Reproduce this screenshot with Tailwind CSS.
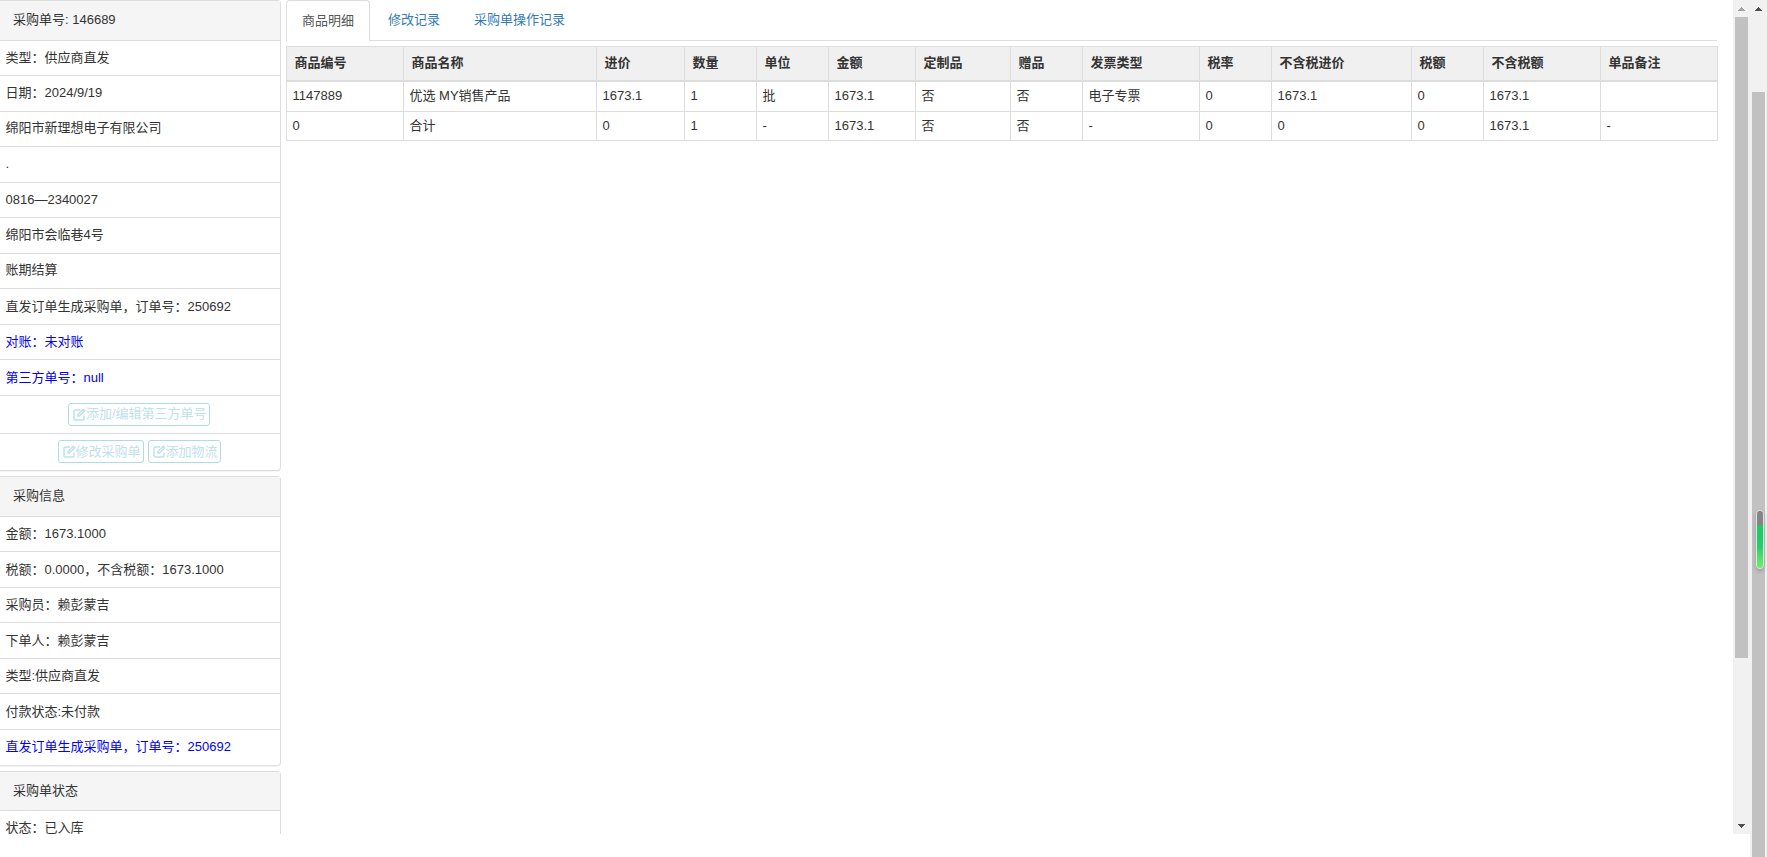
<!DOCTYPE html>
<html lang="zh-CN">
<head>
    <meta charset="UTF-8">
    <meta name="viewport" content="width=device-width, initial-scale=1.0">
    <title>采购单详情</title>
    <script src="https://cdn.jsdelivr.net/npm/@tailwindcss/browser@4"></script>
</head>
<body class="h-screen overflow-hidden bg-white text-[13px] text-[#333] font-['Liberation_Sans','Noto_Sans_CJK_SC',sans-serif]">
<div class="flex h-[857px]">
    <div class="flex flex-col flex-1 min-w-0">
        <div class="flex h-[834px]">
            <!-- Left panels -->
            <aside class="w-[281px] shrink-0 h-full overflow-hidden">
                <div class="border border-l-0 border-[#ddd] rounded-r-[4px] shadow-[0_1px_1px_rgba(0,0,0,0.05)] mb-[5.5px]">
                    <div class="h-[39.5px] flex items-center pl-[13px] pb-[1px] bg-[#f5f5f5] border-b border-[#ddd]">采购单号: 146689</div>
                    <div class="h-[35.5px] flex items-center px-[5.5px] pb-[1px] border-b border-[#ddd]">类型：供应商直发</div>
                    <div class="h-[35.5px] flex items-center px-[5.5px] pb-[2px] border-b border-[#ddd]">日期：2024/9/19</div>
                    <div class="h-[35.5px] flex items-center px-[5.5px] pb-[2px] border-b border-[#ddd]">绵阳市新理想电子有限公司</div>
                    <div class="h-[35.5px] flex items-center px-[5.5px] pb-[1px] border-b border-[#ddd]">.</div>
                    <div class="h-[35.5px] flex items-center px-[5.5px] border-b border-[#ddd]">0816—2340027</div>
                    <div class="h-[35.5px] flex items-center px-[5.5px] pb-[1px] border-b border-[#ddd]">绵阳市会临巷4号</div>
                    <div class="h-[35.5px] flex items-center px-[5.5px] pb-[2px] border-b border-[#ddd]">账期结算</div>
                    <div class="h-[35.5px] flex items-center px-[5.5px] border-b border-[#ddd]">直发订单生成采购单，订单号：250692</div>
                    <div class="h-[35.5px] flex items-center px-[5.5px] border-b border-[#ddd] text-[#0000ff]">对账：未对账</div>
                    <div class="h-[35.5px] flex items-center px-[5.5px] border-b border-[#ddd] text-[#0000ff]">第三方单号：null</div>
                    <div class="h-[38px] flex items-center justify-center pr-[2px] border-b border-[#ddd]">
                        <button class="h-[23px] w-[142px] flex items-center pl-[4px] border border-[#aedbe8] rounded-[3px] text-[#bfe1ec]">
                            <svg class="w-[13px] h-[13px]" viewBox="0 0 13 13" fill="none" stroke="#bfe1ec" stroke-width="1.5"><path d="M11 7.5V10.5a1.5 1.5 0 0 1-1.5 1.5H2.5A1.5 1.5 0 0 1 1 10.5V3.5A1.5 1.5 0 0 1 2.5 2H7"/><path d="M5 6.5 10.2 1.3l1.5 1.5L6.5 8H5z"/></svg>
                            添加/编辑第三方单号
                        </button>
                    </div>
                    <div class="h-[36px] flex items-center justify-center gap-[4px] pr-[2px]">
                        <button class="h-[23px] w-[86px] flex items-center pl-[4px] border border-[#aedbe8] rounded-[3px] text-[#bfe1ec]">
                            <svg class="w-[13px] h-[13px]" viewBox="0 0 13 13" fill="none" stroke="#bfe1ec" stroke-width="1.5"><path d="M11 7.5V10.5a1.5 1.5 0 0 1-1.5 1.5H2.5A1.5 1.5 0 0 1 1 10.5V3.5A1.5 1.5 0 0 1 2.5 2H7"/><path d="M5 6.5 10.2 1.3l1.5 1.5L6.5 8H5z"/></svg>
                            修改采购单
                        </button>
                        <button class="h-[23px] w-[73px] flex items-center pl-[4px] border border-[#aedbe8] rounded-[3px] text-[#bfe1ec]">
                            <svg class="w-[13px] h-[13px]" viewBox="0 0 13 13" fill="none" stroke="#bfe1ec" stroke-width="1.5"><path d="M11 7.5V10.5a1.5 1.5 0 0 1-1.5 1.5H2.5A1.5 1.5 0 0 1 1 10.5V3.5A1.5 1.5 0 0 1 2.5 2H7"/><path d="M5 6.5 10.2 1.3l1.5 1.5L6.5 8H5z"/></svg>
                            添加物流
                        </button>
                    </div>
                </div>

                <div class="border border-l-0 border-[#ddd] rounded-r-[4px] shadow-[0_1px_1px_rgba(0,0,0,0.05)] mb-[5px]">
                    <div class="h-[39.5px] flex items-center pl-[13px] pb-[1px] bg-[#f5f5f5] border-b border-[#ddd]">采购信息</div>
                    <div class="h-[35.5px] flex items-center px-[5.5px] border-b border-[#ddd]">金额：1673.1000</div>
                    <div class="h-[35.5px] flex items-center px-[5.5px] border-b border-[#ddd]">税额：0.0000，不含税额：1673.1000</div>
                    <div class="h-[35.5px] flex items-center px-[5.5px] pb-[1px] border-b border-[#ddd]">采购员：赖彭蒙吉</div>
                    <div class="h-[35.5px] flex items-center px-[5.5px] border-b border-[#ddd]">下单人：赖彭蒙吉</div>
                    <div class="h-[35.5px] flex items-center px-[5.5px] pb-[1px] border-b border-[#ddd]">类型:供应商直发</div>
                    <div class="h-[35.5px] flex items-center px-[5.5px] border-b border-[#ddd]">付款状态:未付款</div>
                    <div class="h-[35px] flex items-center px-[5.5px] text-[#0000ff]">直发订单生成采购单，订单号：250692</div>
                </div>

                <div class="border border-l-0 border-[#ddd] rounded-r-[4px]">
                    <div class="h-[39.5px] flex items-center pl-[13px] pb-[1px] bg-[#f5f5f5] border-b border-[#ddd]">采购单状态</div>
                    <div class="h-[35.5px] flex items-center px-[5.5px] pb-[1px] border-b border-[#ddd]">状态：已入库</div>
                </div>
            </aside>

            <!-- Tabs and table -->
            <main class="flex-1 min-w-0 pl-[5px]">
                <div class="w-[1431px]">
                    <nav class="flex gap-[2px] h-[41px] border-b border-[#ddd]">
                        <a class="w-[84px] h-[41px] flex items-center justify-center bg-white border border-b-0 border-[#ddd] rounded-t-[4px] text-[#555]">商品明细</a>
                        <a class="h-[40px] flex items-center px-4 text-[#337ab7]">修改记录</a>
                        <a class="h-[40px] flex items-center px-4 text-[#337ab7]">采购单操作记录</a>
                    </nav>
                    <table class="mt-[5px] w-[1431px] table-fixed border-collapse">
                        <colgroup>
                            <col class="w-[117px]"><col class="w-[193px]"><col class="w-[88px]"><col class="w-[72px]"><col class="w-[72px]"><col class="w-[87px]"><col class="w-[95px]"><col class="w-[72px]"><col class="w-[117px]"><col class="w-[72px]"><col class="w-[140px]"><col class="w-[72px]"><col class="w-[117px]"><col class="w-[117px]">
                        </colgroup>
                        <thead>
                            <tr class="h-[34px] bg-[#f0f0f0] text-left [&>th]:border [&>th]:border-b-2 [&>th]:border-[#ddd] [&>th]:pl-[7.5px] [&>th]:pb-[2px] [&>th]:font-bold">
                                <th>商品编号</th><th>商品名称</th><th>进价</th><th>数量</th><th>单位</th><th>金额</th><th>定制品</th><th>赠品</th><th>发票类型</th><th>税率</th><th>不含税进价</th><th>税额</th><th>不含税额</th><th>单品备注</th>
                            </tr>
                        </thead>
                        <tbody>
                            <tr class="h-[31px] [&>td]:border [&>td]:border-[#ddd] [&>td]:pl-[5.5px] [&>td]:pb-[1px]">
                                <td>1147889</td><td>优选 MY销售产品</td><td>1673.1</td><td>1</td><td>批</td><td>1673.1</td><td>否</td><td>否</td><td>电子专票</td><td>0</td><td>1673.1</td><td>0</td><td>1673.1</td><td></td>
                            </tr>
                            <tr class="h-[29px] [&>td]:border [&>td]:border-[#ddd] [&>td]:pl-[5.5px]">
                                <td>0</td><td>合计</td><td>0</td><td>1</td><td>-</td><td>1673.1</td><td>否</td><td>否</td><td>-</td><td>0</td><td>0</td><td>0</td><td>1673.1</td><td>-</td>
                            </tr>
                        </tbody>
                    </table>
                </div>
            </main>

            <!-- Inner scrollbar -->
            <div class="w-[17px] shrink-0 h-full flex flex-col items-center bg-[#f1f1f1]">
                <div class="h-[17px] flex items-center justify-center">
                    <svg class="w-[7px] h-[4px]" viewBox="0 0 7 4" shape-rendering="crispEdges"><polygon points="3.5,0 7,4 0,4" fill="#a3a3a3"/></svg>
                </div>
                <div class="w-[13px] h-[641px] bg-[#c1c1c1]"></div>
                <div class="flex-1"></div>
                <div class="h-[17px] flex items-center justify-center">
                    <svg class="w-[7px] h-[4px]" viewBox="0 0 7 4" shape-rendering="crispEdges"><polygon points="0,0 7,0 3.5,4" fill="#505050"/></svg>
                </div>
            </div>
        </div>
    </div>

    <!-- Page scrollbar -->
    <div class="w-[17px] shrink-0 h-full flex flex-col items-center bg-[#f1f1f1]">
        <div class="h-[17px] flex items-center justify-center">
            <svg class="w-[7px] h-[4px]" viewBox="0 0 7 4" shape-rendering="crispEdges"><polygon points="3.5,0 7,4 0,4" fill="#505050"/></svg>
        </div>
        <div class="h-[75px]"></div>
        <div class="relative w-[13px] flex-1 bg-[#c1c1c1]">
            <!-- green meter over the thumb -->
            <div class="absolute left-[4px] top-[418px] w-[8px] h-[59px] rounded-[4px] overflow-hidden border border-[#e4e4e4] shadow-[0_2px_4px_rgba(0,0,0,0.2)] flex flex-col">
                <div class="h-[14px] bg-[#858585]"></div>
                <div class="flex-1 bg-gradient-to-b from-[#1cc864] via-[#1fcf68] to-[#6cf06c]"></div>
            </div>
        </div>
    </div>
</div>
</body>
</html>
